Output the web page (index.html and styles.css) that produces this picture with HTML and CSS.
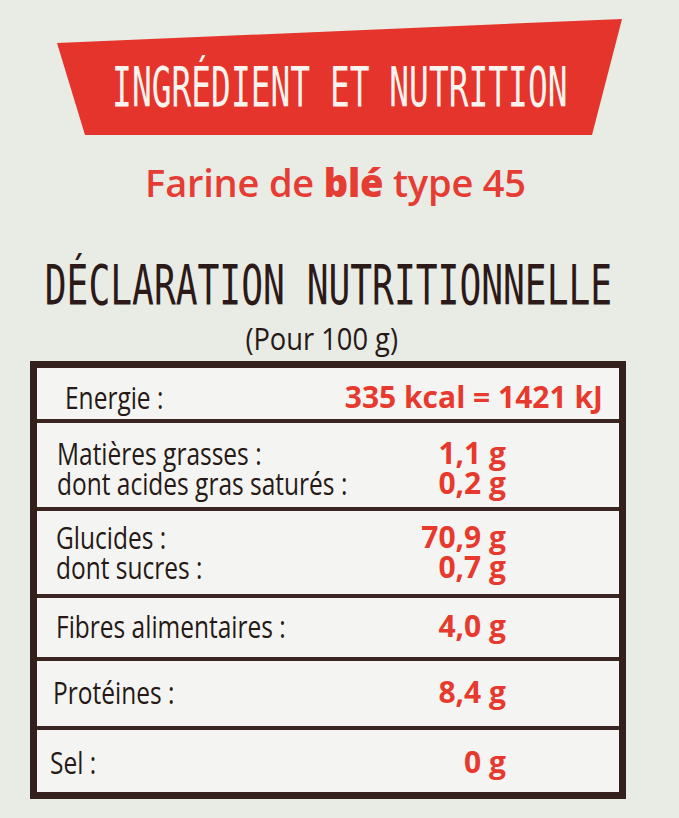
FILE: index.html
```html
<!DOCTYPE html>
<html lang="fr">
<head>
<meta charset="utf-8">
<title>Ingrédient et nutrition</title>
<link rel="stylesheet" href="styles.css">
</head>
<body>
<main class="label">
  <div class="banner"><span class="banner-text">INGRÉDIENT ET NUTRITION</span></div>
  <p class="product">Farine de <b>blé</b> type 45</p>
  <h1 class="decl"><span>DÉCLARATION NUTRITIONNELLE</span></h1>
  <p class="per"><span>(Pour 100 g)</span></p>
  <div class="table">
    <div class="row r-energy">
      <span class="lab">Energie :</span><span class="val">335 kcal = 1421 kJ</span>
    </div>
    <div class="row r-fat">
      <span class="lab">Matières grasses :</span><span class="val">1,1 g</span>
      <span class="lab">dont acides gras saturés :</span><span class="val">0,2 g</span>
    </div>
    <div class="row r-carb">
      <span class="lab">Glucides :</span><span class="val">70,9 g</span>
      <span class="lab">dont sucres :</span><span class="val">0,7 g</span>
    </div>
    <div class="row r-fibre">
      <span class="lab">Fibres alimentaires :</span><span class="val">4,0 g</span>
    </div>
    <div class="row r-prot">
      <span class="lab">Protéines :</span><span class="val">8,4 g</span>
    </div>
    <div class="row r-salt">
      <span class="lab">Sel :</span><span class="val">0 g</span>
    </div>
  </div>
</main>
</body>
</html>
```

FILE: styles.css
```css
html, body {
  margin: 0;
  padding: 0;
}

body {
  width: 679px;
  height: 818px;
  overflow: hidden;
  background: #e9ebe5;
  font-family: "Open Sans", "Liberation Sans", sans-serif;
  color: #261916;
}

.label {
  padding-top: 19px;
}

.banner {
  box-sizing: border-box;
  margin-left: 57px;
  width: 565px;
  height: 116px;
  padding-top: 41px;
  background: #e5342b;
  clip-path: polygon(0 24px, 565px 0, 535px 116px, 28px 116px);
  display: flex;
  justify-content: center;
  align-items: flex-start;
}

.banner-text {
  font-family: "DejaVu Sans Mono", monospace;
  font-size: 55px;
  line-height: 55px;
  color: #fbf3ee;
  white-space: nowrap;
  transform: scaleX(0.598);
}

.product {
  margin: 25px 0 0;
  padding-right: 8px;
  text-align: center;
  font-size: 38px;
  line-height: 44px;
  font-weight: 600;
  color: #e53d33;
  letter-spacing: -0.2px;
}

.product b {
  font-weight: 800;
}

.decl {
  margin: 54px 0 0;
  padding-right: 22px;
  display: flex;
  justify-content: center;
  font-family: "DejaVu Sans Mono", monospace;
  font-weight: normal;
  font-size: 55px;
  line-height: 55px;
  color: #2b1a18;
}

.decl span {
  white-space: nowrap;
  transform: scaleX(0.659);
}

.per {
  margin: 8px 0 0;
  padding-right: 36px;
  display: flex;
  justify-content: center;
  font-size: 31px;
  line-height: 34px;
  color: #261916;
}

.per span {
  white-space: nowrap;
  transform: scaleX(0.88);
}

.table {
  box-sizing: border-box;
  margin: 6px 0 0 30px;
  width: 596px;
  border: 7px solid #33201d;
  background: #f4f5f2;
}

.row {
  box-sizing: border-box;
  display: grid;
  grid-template-columns: 1fr auto;
  align-content: start;
  column-gap: 10px;
  padding-right: 113px;
  padding-left: 20px;
}

.row + .row {
  border-top: 4px solid #3a2522;
}

.lab {
  font-size: 31px;
  line-height: 30px;
  font-weight: 500;
  white-space: nowrap;
  transform: scaleX(0.79);
  transform-origin: left center;
}

.val {
  font-size: 30px;
  line-height: 30px;
  font-weight: 700;
  color: #e8392f;
  text-align: right;
  white-space: nowrap;
}

.r-energy {
  height: 51px;
  padding-top: 14px;
  padding-left: 28px;
  padding-right: 16px;
}

.r-fat {
  height: 88px;
  padding-top: 15px;
}

.r-carb {
  height: 87px;
  padding-top: 11px;
  padding-left: 19px;
}

.r-fibre {
  height: 63px;
  padding-top: 13px;
  padding-left: 19px;
}

.r-prot {
  height: 69px;
  padding-top: 16px;
  padding-left: 16px;
}

.r-salt {
  height: 66px;
  padding-top: 17px;
  padding-left: 13px;
}
```
